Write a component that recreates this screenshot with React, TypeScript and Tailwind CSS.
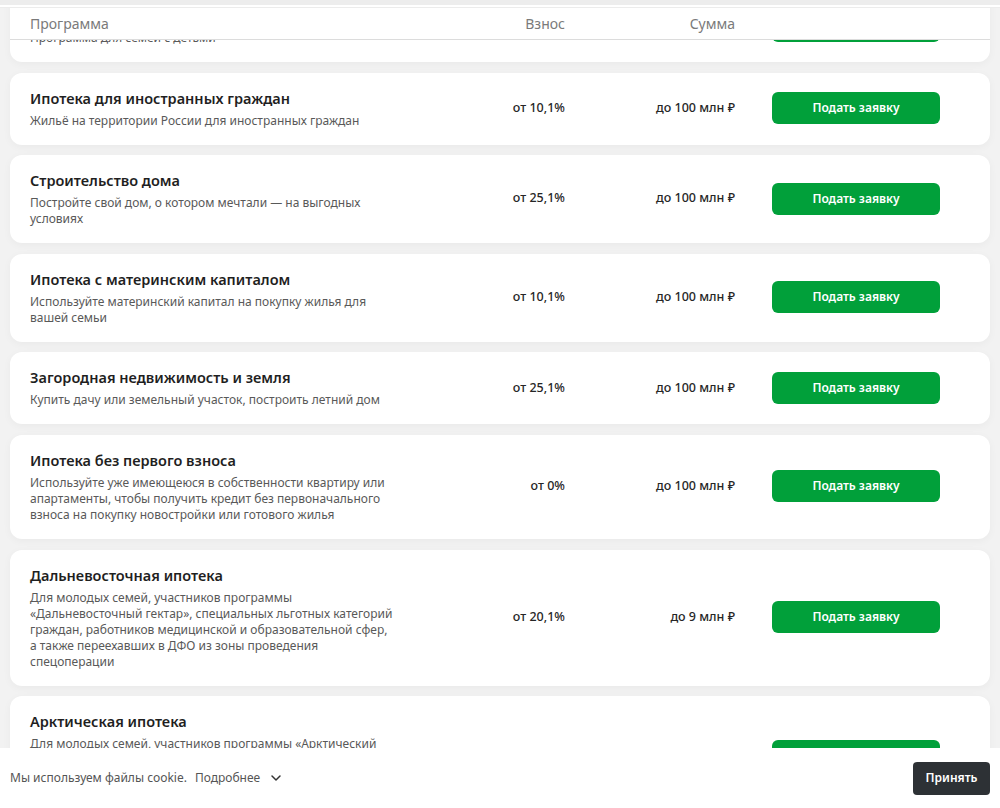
import { ChevronDown } from "lucide-react";

type Program = {
  title: string;
  lines: string[];
  rate: string;
  sum: string;
};

// descriptions are kept line by line, the way the page wraps them
const programs: Program[] = [
  {
    title: "Семейная ипотека",
    lines: ["Программа для семей с детьми"],
    rate: "от 6%",
    sum: "до 12 млн ₽",
  },
  {
    title: "Ипотека для иностранных граждан",
    lines: ["Жильё на территории России для иностранных граждан"],
    rate: "от 10,1%",
    sum: "до 100 млн ₽",
  },
  {
    title: "Строительство дома",
    lines: ["Постройте свой дом, о котором мечтали — на выгодных", "условиях"],
    rate: "от 25,1%",
    sum: "до 100 млн ₽",
  },
  {
    title: "Ипотека с материнским капиталом",
    lines: ["Используйте материнский капитал на покупку жилья для", "вашей семьи"],
    rate: "от 10,1%",
    sum: "до 100 млн ₽",
  },
  {
    title: "Загородная недвижимость и земля",
    lines: ["Купить дачу или земельный участок, построить летний дом"],
    rate: "от 25,1%",
    sum: "до 100 млн ₽",
  },
  {
    title: "Ипотека без первого взноса",
    lines: [
      "Используйте уже имеющеюся в собственности квартиру или",
      "апартаменты, чтобы получить кредит без первоначального",
      "взноса на покупку новостройки или готового жилья",
    ],
    rate: "от 0%",
    sum: "до 100 млн ₽",
  },
  {
    title: "Дальневосточная ипотека",
    lines: [
      "Для молодых семей, участников программы",
      "«Дальневосточный гектар», специальных льготных категорий",
      "граждан, работников медицинской и образовательной сфер,",
      "а также переехавших в ДФО из зоны проведения",
      "спецоперации",
    ],
    rate: "от 20,1%",
    sum: "до 9 млн ₽",
  },
  {
    title: "Арктическая ипотека",
    lines: [
      "Для молодых семей, участников программы «Арктический",
      "гектар», специальных льготных категорий граждан,",
      "работников медицинской и образовательной сфер, а также",
      "переехавших в Арктическую зону",
    ],
    rate: "от 20,1%",
    sum: "до 9 млн ₽",
  },
];

function ProgramCard({ p }: { p: Program }) {
  return (
    <div className="flex items-center rounded-xl bg-white pt-[15px] pb-4 pl-5 pr-[50px] shadow-[0_2px_8px_rgba(0,0,0,0.04)]">
      <div className="min-w-0 flex-1">
        <div className="text-[14.5px] leading-5 font-semibold text-[#1f1f1f]">{p.title}</div>
        <p className="mt-[5px] text-[12px] leading-4 text-[#595959]">
          {p.lines.map((l, i) => (
            <span key={i} className="block whitespace-nowrap">
              {l}
            </span>
          ))}
        </p>
      </div>
      <div className="w-[120px] text-right text-[12.5px] font-medium text-[#262626]">{p.rate}</div>
      <div className="w-[170px] text-right text-[12.5px] font-medium text-[#262626]">{p.sum}</div>
      <button className="ml-[37px] h-8 w-[168px] shrink-0 rounded-md bg-[#01a03a] text-[12px] font-semibold text-white">
        Подать заявку
      </button>
    </div>
  );
}

export default function App() {
  return (
    <div
      className="relative h-[808px] overflow-hidden bg-[#f2f2f2]"
      style={{ fontFamily: '"Noto Sans", "Open Sans", sans-serif' }}
    >
      <div className="mx-[10px] mt-[-10px] flex flex-col gap-[10.6px]">
        {programs.map((p) => (
          <ProgramCard key={p.title} p={p} />
        ))}
      </div>

      {/* sticky table header */}
      <div className="absolute inset-x-0 top-0">
        <div className="h-[5px] bg-[#ededed]" />
        <div className="h-[2px] bg-white" />
        <div className="h-px bg-[#ececec]" />
        <div className="mx-[10px] flex h-[32px] items-center border-b border-[#dcdcdc] bg-white pl-5 pr-[50px] text-[14px] text-[#7a7a7a]">
          <div className="flex-1">Программа</div>
          <div className="w-[120px] text-right">Взнос</div>
          <div className="w-[170px] text-right">Сумма</div>
          <div className="ml-[37px] w-[168px]" />
        </div>
      </div>

      {/* cookie banner */}
      <div className="absolute inset-x-0 bottom-0 flex h-[60px] items-center justify-between bg-white px-[10px]">
        <div className="flex items-center text-[12px] text-[#555]">
          <span>Мы используем файлы cookie.</span>
          <span className="ml-2">Подробнее</span>
          <ChevronDown size={16} strokeWidth={2.25} className="ml-2 text-[#333]" />
        </div>
        <button className="h-[33px] w-[77px] rounded bg-[#2d3135] text-[12px] font-semibold text-white">
          Принять
        </button>
      </div>
    </div>
  );
}
